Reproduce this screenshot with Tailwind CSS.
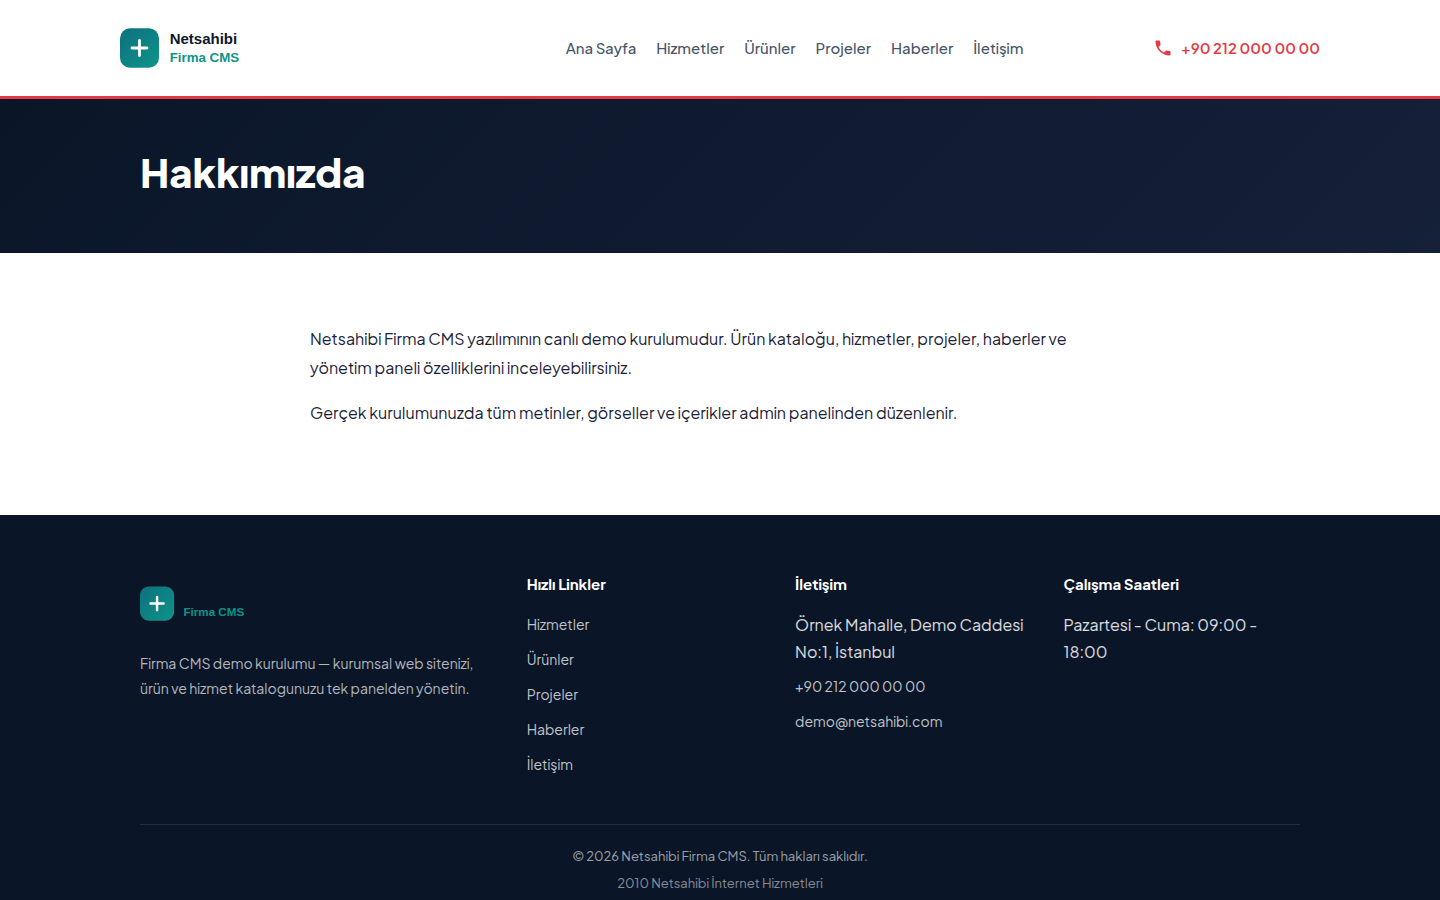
<!DOCTYPE html>
<html lang="tr">
<head>
    <meta charset="UTF-8">
    <meta name="viewport" content="width=device-width, initial-scale=1.0">
    <title>Hakkımızda - Netsahibi Firma CMS</title>
    <script src="https://cdn.jsdelivr.net/npm/@tailwindcss/browser@4"></script>
</head>
<body class="bg-white font-['Plus_Jakarta_Sans','Inter',sans-serif] text-base text-[#1a2238]">
    <!-- Header -->
    <header class="border-b-3 border-[#e63946] bg-white">
        <div class="mx-auto flex h-24 max-w-[1200px] items-center justify-between">
            <a href="/" aria-label="Netsahibi Firma CMS">
                <svg class="h-12 w-[316px]" viewBox="0 0 316 48" fill="none">
                    <defs>
                        <linearGradient id="mark" x1="0" y1="0" x2="1" y2="1">
                            <stop offset="0" stop-color="#0e7080"/>
                            <stop offset="1" stop-color="#0d9488"/>
                        </linearGradient>
                    </defs>
                    <rect y="4.300" width="39" height="39.400" rx="10" fill="url(#mark)"/>
                    <path d="M19.500 16.500v15M12 24h15" stroke="#fff" stroke-width="2.800" stroke-linecap="round"/>
                    <text x="49.700" y="20" font-family="Liberation Sans, Arial, sans-serif" font-size="15" font-weight="700" fill="#0f172a">Netsahibi</text>
                    <text x="49.700" y="38" font-family="Liberation Sans, Arial, sans-serif" font-size="13.300" font-weight="700" fill="#0d9488">Firma CMS</text>
                </svg>
            </a>
            <nav class="flex gap-5 text-[15px] font-medium text-[#475569]">
                <a href="/">Ana Sayfa</a>
                <a href="/hizmetler">Hizmetler</a>
                <a href="/urunler">Ürünler</a>
                <a href="/projeler">Projeler</a>
                <a href="/haberler">Haberler</a>
                <a href="/iletisim">İletişim</a>
            </nav>
            <a href="tel:+902120000000" class="flex items-center gap-2 text-[15px] font-semibold text-[#e63946]">
                <svg class="size-5" viewBox="0 0 24 24" fill="currentColor"><path d="M6.620 10.790c1.440 2.830 3.760 5.140 6.590 6.590l2.200-2.200c.27-.27.67-.36 1.020-.24 1.120.37 2.330.57 3.570.57.55 0 1 .45 1 1V20c0 .55-.45 1-1 1-9.390 0-17-7.610-17-17 0-.55.45-1 1-1h3.500c.55 0 1 .45 1 1 0 1.250.2 2.450.57 3.570.11.35.03.74-.25 1.020l-2.200 2.200z"/></svg>
                +90 212 000 00 00
            </a>
        </div>
    </header>

    <!-- Page title -->
    <section class="bg-linear-135 from-[#0a1628] to-[#152039] pt-12 pb-14">
        <div class="mx-auto max-w-[1200px] px-5">
            <h1 class="text-[40px] leading-[50px] font-extrabold text-white">Hakkımızda</h1>
        </div>
    </section>

    <!-- Content -->
    <main class="mx-auto max-w-[860px] space-y-4 px-5 pt-[71px] pb-22 leading-[29px]">
        <p>Netsahibi Firma CMS yazılımının canlı demo kurulumudur. Ürün kataloğu, hizmetler, projeler, haberler ve yönetim paneli özelliklerini inceleyebilirsiniz.</p>
        <p>Gerçek kurulumunuzda tüm metinler, görseller ve içerikler admin panelinden düzenlenir.</p>
    </main>

    <!-- Footer -->
    <footer class="bg-[#0a1628] pt-14 pb-6 text-white/85">
        <div class="mx-auto max-w-[1200px] px-5">
            <div class="grid grid-cols-[1.5fr_1fr_1fr_1fr] gap-8 pb-[46px]">
                <div>
                    <svg class="mt-3 h-[42px] w-70" viewBox="0 0 320 48" fill="none">
                        <rect y="4" width="39" height="39" rx="10" fill="url(#mark)"/>
                        <path d="M19.500 16v15M12 23.500h15" stroke="#fff" stroke-width="2.800" stroke-linecap="round"/>
                        <text x="49.700" y="38" font-family="Liberation Sans, Arial, sans-serif" font-size="13.300" font-weight="700" fill="#0d9488">Firma CMS</text>
                    </svg>
                    <p class="mt-[26px] text-sm leading-[25px] text-white/70">Firma CMS demo kurulumu — kurumsal web sitenizi, ürün ve hizmet katalogunuzu tek panelden yönetin.</p>
                </div>
                <div>
                    <h2 class="mb-3.5 text-[15px] leading-[26px] font-bold text-white">Hızlı Linkler</h2>
                    <ul class="space-y-2 text-sm leading-[27px] text-white/75">
                        <li><a href="/hizmetler">Hizmetler</a></li>
                        <li><a href="/urunler">Ürünler</a></li>
                        <li><a href="/projeler">Projeler</a></li>
                        <li><a href="/haberler">Haberler</a></li>
                        <li><a href="/iletisim">İletişim</a></li>
                    </ul>
                </div>
                <div class="leading-[27px]">
                    <h2 class="mb-3.5 text-[15px] leading-[26px] font-bold text-white">İletişim</h2>
                    <p>Örnek Mahalle, Demo Caddesi No:1, İstanbul</p>
                    <a href="tel:+902120000000" class="mt-2 block text-sm leading-[27px] text-white/75">+90 212 000 00 00</a>
                    <a href="mailto:demo@netsahibi.com" class="mt-2 block text-sm leading-[27px] text-white/75">demo@netsahibi.com</a>
                </div>
                <div class="leading-[27px]">
                    <h2 class="mb-3.5 text-[15px] leading-[26px] font-bold text-white">Çalışma Saatleri</h2>
                    <p>Pazartesi - Cuma: 09:00 - 18:00</p>
                </div>
            </div>
            <div class="border-t border-white/10 pt-5 text-center">
                <p class="text-[13px] leading-[22px] text-white/60">© 2026 Netsahibi Firma CMS. Tüm hakları saklıdır.</p>
                <a href="/" class="mt-1 block text-[13px] leading-6 text-white/50">2010 Netsahibi İnternet Hizmetleri</a>
            </div>
        </div>
    </footer>
</body>
</html>
